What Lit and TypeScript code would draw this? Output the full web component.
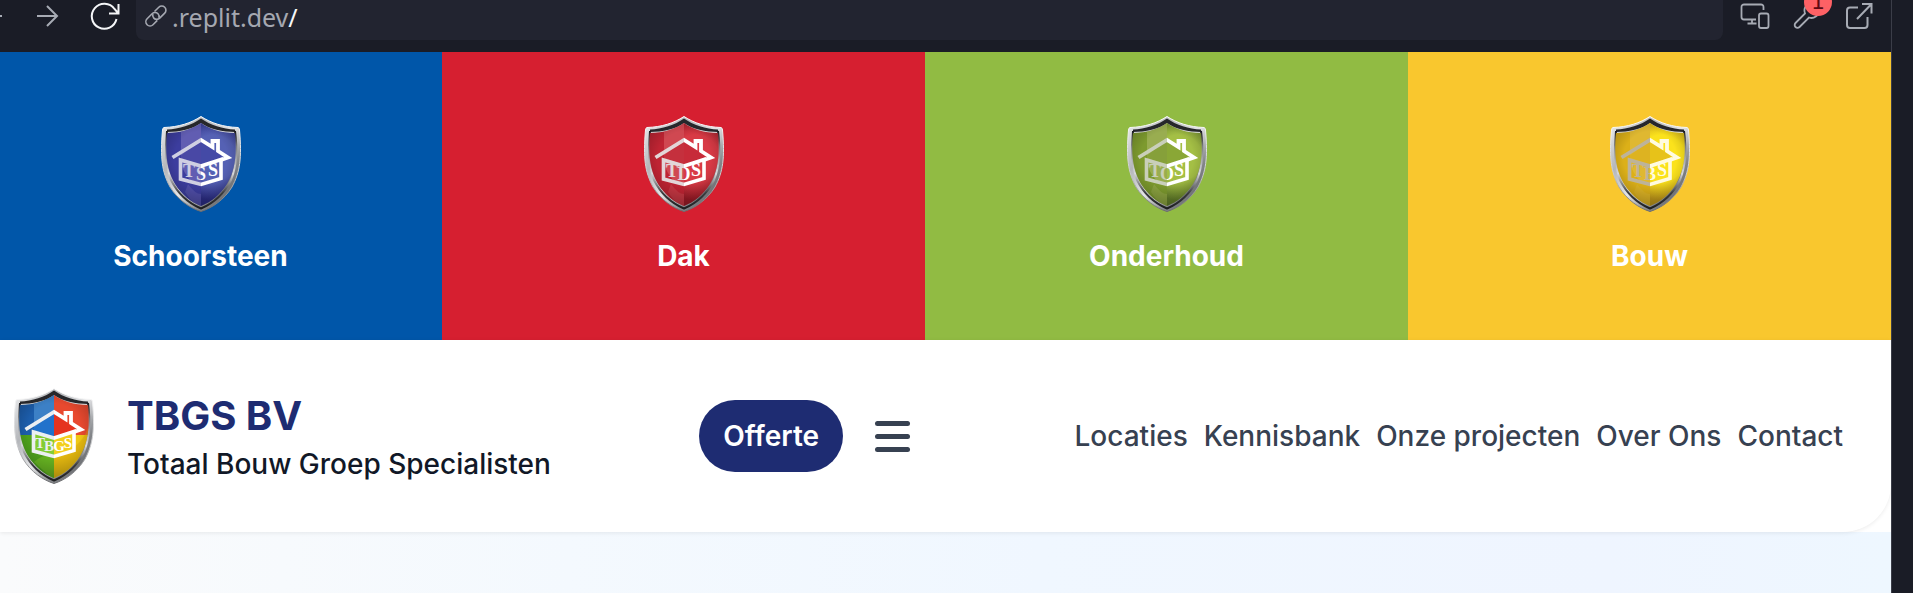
import { LitElement, html, css, svg } from "lit";
import { customElement, property } from "lit/decorators.js";

type Tone = "blue" | "red" | "green" | "yellow" | "multi";

interface ShieldTone {
  dark: string;
  mid: string;
  light: string;
  band: string;
  lineLeft: string;
  lineRight: string;
}

const TONES: Record<Tone, ShieldTone> = {
  blue: { dark: "#2c2d86", mid: "#3c3d9e", light: "#5561b4", band: "#6d68b8", lineLeft: "#cfcfe2", lineRight: "#ffffff" },
  red: { dark: "#9c1a26", mid: "#bf2433", light: "#d83a45", band: "#d5545c", lineLeft: "#e2d6d8", lineRight: "#ffffff" },
  green: { dark: "#64802a", mid: "#7d9a2e", light: "#a4bf45", band: "#a3b35c", lineLeft: "#c9cfba", lineRight: "#ffffff" },
  yellow: { dark: "#c39a1a", mid: "#dcb018", light: "#fbe21c", band: "#e0bb3a", lineLeft: "#bdb39a", lineRight: "#fffbe0" },
  multi: { dark: "#1d4f9c", mid: "#2a69b5", light: "#e8442e", band: "#4a86c8", lineLeft: "#eceff2", lineRight: "#ffffff" },
};

const INNER = "M40 7C48 13 60 17 74 17C76 40 74 54 66 68C59 79 50 86 40 90C30 86 21 79 14 68C6 54 4 40 6 17C20 17 32 13 40 7Z";

@customElement("brand-shield")
export class BrandShield extends LitElement {
  @property() tone: Tone = "blue";
  @property() letters = "";

  static styles = css`
    :host { display: block; flex: none; width: 80px; height: 96px; }
    .shield { display: block; width: 100%; height: 100%; }
    .letters { font: bold 18px "Liberation Serif", serif; text-anchor: middle; }
    .letters.four { font-size: 15px; }
  `;

  private renderField(t: ShieldTone) {
    if (this.tone === "multi") {
      return svg`
        <rect width="40" height="47" fill="#1c5dab"></rect>
        <rect x="20" width="20" height="47" fill="#3c80c6"></rect>
        <rect x="40" width="40" height="47" fill="#e8492f"></rect>
        <rect y="47" width="40" height="49" fill="#4da01c"></rect>
        <rect x="40" y="47" width="40" height="49" fill="#efc814"></rect>
        <path d="M40 24 62 41 40 49Z" fill="#e5331f"></path>
        <path d="M40 24 18 41 40 49Z" fill="#2272cb"></path>
        <path d="M19.500 44 40 50V68.500L19.500 63Z" fill="#84cc34"></path>
        <path d="M60 44 40 50V68.500L60 63Z" fill="#f3cf1c"></path>
        <path d="M20 74Q30 65 40 68V92Z" fill="#67b522"></path>
        <path d="M40 96V68Q66 62 74 40V96Z" fill="#d9a60a" opacity=".45"></path>`;
    }
    return svg`
      <rect width="40" height="96" fill=${t.mid}></rect>
      <rect x="40" width="40" height="96" fill="url(#glow)"></rect>
      <path d="M20 0H40V70Q26 66 20 48Z" fill=${t.band} opacity=".75"></path>
      <path d="M40 24 62 41 40 49 18 41Z" fill=${t.mid} opacity=".65"></path>
      <path d="M27 68Q34 78 40 78V92Q30 86 24 76Z" fill=${t.band} opacity=".4"></path>`;
  }

  render() {
    const t = TONES[this.tone];
    const four = this.letters.length > 3;
    return html`
      <svg class="shield" viewBox="0 0 80 96" aria-hidden="true">
        <defs>
          <linearGradient id="metal" x1="0" y1="0" x2="1" y2="1">
            <stop offset="0" stop-color="#f2f3f4"></stop>
            <stop offset=".3" stop-color="#b4b6ba"></stop>
            <stop offset=".52" stop-color="#e4e5e7"></stop>
            <stop offset=".72" stop-color="#85878b"></stop>
            <stop offset="1" stop-color="#4b4d50"></stop>
          </linearGradient>
          <linearGradient id="edge" x1="0" y1="0" x2="0" y2="1">
            <stop offset="0" stop-color="#17181c"></stop>
            <stop offset=".2" stop-color="#7a7c80"></stop>
            <stop offset=".55" stop-color="#d8d9db"></stop>
            <stop offset=".8" stop-color="#3a3b3e"></stop>
            <stop offset="1" stop-color="#1d1e20"></stop>
          </linearGradient>
          <linearGradient id="rim" x1="0" y1="0" x2="0" y2="1">
            <stop offset="0" stop-color="#ffffff"></stop>
            <stop offset=".6" stop-color="#c9cacc"></stop>
            <stop offset="1" stop-color="#6a6b6e"></stop>
          </linearGradient>
          <radialGradient id="glow" gradientUnits="userSpaceOnUse" cx="52" cy="42" r="42">
            <stop offset="0" stop-color=${t.light}></stop>
            <stop offset=".55" stop-color=${t.light}></stop>
            <stop offset="1" stop-color=${t.dark}></stop>
          </radialGradient>
          <radialGradient id="shade" gradientUnits="userSpaceOnUse" cx="40" cy="42" r="48">
            <stop offset=".55" stop-color="#000000" stop-opacity="0"></stop>
            <stop offset="1" stop-color="#000000" stop-opacity=".25"></stop>
          </radialGradient>
          <linearGradient id="line" gradientUnits="userSpaceOnUse" x1="0" y1="0" x2="80" y2="0">
            <stop offset=".5" stop-color=${t.lineLeft}></stop>
            <stop offset=".5" stop-color=${t.lineRight}></stop>
          </linearGradient>
          <clipPath id="field"><path d=${INNER}></path></clipPath>
        </defs>
        <path
          d="M40 .5C50 7 62 11 77 11.500Q78.500 12 78.500 14C81 42 79 56 71 71C63 84 51 92 40 95.500C29 92 17 84 9 71C1 56 -1 42 1.500 14Q1.500 12 3 11.500C18 11 30 7 40 .5Z"
          fill="url(#metal)" stroke="url(#rim)"></path>
        <path d="M40 2.500C49 9 62 13 74 13.500V16C62 16 48 13 40 7C32 13 18 16 6 16V13.500C18 13 31 9 40 2.500Z" fill="#26272b"></path>
        <path d="M74 15Q78 44 70 64Q60 84 40 92.500Q20 84 10 64Q3 44 6 15" fill="none" stroke="url(#edge)" stroke-width="2"></path>
        <g clip-path="url(#field)">
          ${this.renderField(t)}
          <rect width="80" height="96" fill="url(#shade)"></rect>
        </g>
        <path d="M11.500 41.500 40 24 51.500 31V25H57V35L67 41.500 60 44" fill="none" stroke="url(#line)" stroke-width="3.800"></path>
        <path d="M19.500 44 40 50 60 43.500V62.500L40 68.500 19.500 63Z" fill="none" stroke="url(#line)" stroke-width="3.600"></path>
        ${four
          ? svg`<text class="letters four" x="26 35 45 54" y="59.500 62.500 62.500 59.500" fill="url(#line)">${this.letters}</text>`
          : svg`<text class="letters" x="28 40 52" y="60.500 64 60" fill="url(#line)">${this.letters}</text>`}
      </svg>`;
  }
}

@customElement("browser-bar")
export class BrowserBar extends LitElement {
  static styles = css`
    :host { display: block; background: #1a1c26; }
    .bar { display: flex; align-items: flex-start; height: 52px; box-sizing: border-box; padding-right: 16px; }
    .tool { display: flex; align-items: center; justify-content: center; position: relative; flex: none; height: 32px; padding: 0; border: 0; background: none; color: #a7abb4; }
    .tool svg { display: block; overflow: visible; }
    .back { width: 2px; justify-content: flex-end; }
    .forward { width: 90px; }
    .reload { width: 26px; color: #f5f6f8; }
    .address { display: flex; align-items: flex-start; flex: 1; gap: 4px; height: 40px; margin: 0 16px 0 18px; padding-left: 8px; box-sizing: border-box; border-radius: 0 0 8px 8px; background: #222430; color: #a5a8b1; }
    .link { flex: none; margin-top: 4px; }
    .url { font: 25px/34px "Noto Sans", sans-serif; }
    .slash { color: #f5f6f8; }
    .tools { display: flex; gap: 20px; }
    .tools .tool { width: 32px; }
    .badge { position: absolute; top: -12px; right: -9px; width: 28px; height: 28px; border-radius: 50%; background: #fe6165; color: #5c0a14; font: 22px/28px "DejaVu Sans", sans-serif; text-align: center; }
  `;

  render() {
    return html`
      <div class="bar">
        <button class="tool back" aria-label="Back">
          <svg width="24" height="24" viewBox="0 0 24 24" fill="none" stroke="currentColor" stroke-width="2"><path d="M3 12h21"></path></svg>
        </button>
        <button class="tool forward" aria-label="Forward">
          <svg width="24" height="24" viewBox="0 0 24 24" fill="none" stroke="currentColor" stroke-width="2"><path d="M2 12h20M12 2l10 10-10 10"></path></svg>
        </button>
        <button class="tool reload" aria-label="Reload">
          <svg width="30" height="28" viewBox="0 0 30 28" fill="none" stroke="currentColor" stroke-width="2"><path d="M26.500 17A12.500 12.500 0 1 1 24.500 7L28 11M28.500 2v9.500H19"></path></svg>
        </button>
        <div class="address">
          <svg class="link" width="24" height="24" viewBox="0 0 24 24" fill="none" stroke="currentColor" stroke-width="1.600">
            <path d="M10.500 7.500 14.800 3.200a4.100 4.100 0 0 1 5.900 5.900l-5 5a4.100 4.100 0 0 1-5.900 0 3.800 3.800 0 0 1-.8-4.100"></path>
            <path d="M13.300 16.400 9 20.700a4.100 4.100 0 0 1-5.900-5.900l5-5a4.100 4.100 0 0 1 5.900 0 3.800 3.800 0 0 1 .8 4.100"></path>
          </svg>
          <span class="url">.replit.dev<span class="slash">/</span></span>
        </div>
        <div class="tools">
          <button class="tool" aria-label="Devices">
            <svg width="30" height="28" viewBox="0 0 30 28" fill="none" stroke="currentColor" stroke-width="1.800">
              <path d="M23.500 8V5a2.500 2.500 0 0 0-2.500-2.500H4A2.500 2.500 0 0 0 1.500 5v10A2.500 2.500 0 0 0 4 17.500h12M12 17.500v4M7.500 21.500h9"></path>
              <rect x="19" y="11.500" width="9.500" height="14.500" rx="2"></rect>
            </svg>
          </button>
          <button class="tool" aria-label="Developer tools, 1 message">
            <svg width="28" height="28" viewBox="0 0 28 28" fill="none" stroke="currentColor" stroke-width="1.800">
              <path d="M26 8.500a7.500 7.500 0 0 1-10 7L6.500 25a2.800 2.800 0 0 1-4-4L12 11.500a7.500 7.500 0 0 1 9-10l-4 5 3 3Z"></path>
            </svg>
            <span class="badge">1</span>
          </button>
          <button class="tool" aria-label="Open in new tab">
            <svg width="28" height="28" viewBox="0 0 28 28" fill="none" stroke="currentColor" stroke-width="2">
              <path d="M13 5.500H5A3 3 0 0 0 2 8.500V23a3 3 0 0 0 3 3h14.500a3 3 0 0 0 3-3V15M17 2h9.500v9.500M26 2.500 12 17"></path>
            </svg>
          </button>
        </div>
      </div>`;
  }
}

@customElement("app-root")
export class AppRoot extends LitElement {
  static styles = css`
    :host { display: block; background: #1a1c26; font-family: Inter, sans-serif; }
    .window { display: flex; flex-direction: column; min-height: 100vh; margin-right: 22px; overflow: hidden; box-shadow: 1px 0 0 #3b3d48; }
    .tiles { display: grid; grid-template-columns: repeat(4, 1fr); margin-left: -41px; }
    .tile { display: flex; flex-direction: column; align-items: center; gap: 24px; padding: 64px 0; color: #ffffff; font-size: 28px; line-height: 40px; font-weight: 700; text-decoration: none; }
    .tile.blue { background: #0056a9; }
    .tile.red { background: #d61f30; }
    .tile.green { background: #91bb43; }
    .tile.yellow { background: #f9c72e; }
    .page { display: flex; flex-direction: column; flex: 1; background: #ffffff; }
    .nav { display: flex; align-items: center; justify-content: space-between; padding: 48px 48px 48px 14px; border-radius: 0 0 48px 0; background: #ffffff; box-shadow: 0 1px 4px rgba(0, 0, 0, 0.08); position: relative; }
    .brand { display: flex; align-items: center; gap: 33px; color: #111827; text-decoration: none; }
    .names { display: flex; flex-direction: column; }
    .name { color: #1e2c72; font-size: 40px; line-height: 56px; font-weight: 700; }
    .tagline { font-size: 28px; line-height: 40px; font-weight: 500; }
    .actions { display: flex; align-items: center; gap: 16px; }
    .quote { padding: 16px 24px; border: 0; border-radius: 36px; background: #1e2c72; color: #ffffff; font: 600 28px/40px Inter, sans-serif; }
    .menu { display: flex; flex-direction: column; gap: 8px; padding: 16px; border: 0; background: none; }
    .line { width: 35px; height: 5px; border-radius: 3px; background: #374151; }
    .links { display: flex; gap: 16px; margin: 0; padding: 0; list-style: none; }
    .item { color: #374151; font-size: 28px; line-height: 40px; font-weight: 500; text-decoration: none; }
    .hero { flex: 1; background: linear-gradient(90deg, #fafbfc, #f4f9fe 30%, #f0f7ff 55%, #eff5ff 85%, #eef7ff); }
  `;

  private tiles: { tone: Tone; letters: string; label: string }[] = [
    { tone: "blue", letters: "TSS", label: "Schoorsteen" },
    { tone: "red", letters: "TDS", label: "Dak" },
    { tone: "green", letters: "TOS", label: "Onderhoud" },
    { tone: "yellow", letters: "TBS", label: "Bouw" },
  ];

  private links = ["Locaties", "Kennisbank", "Onze projecten", "Over Ons", "Contact"];

  render() {
    return html`
      <div class="window">
        <browser-bar></browser-bar>
        <div class="tiles">
          ${this.tiles.map(
            (t) => html`<a class="tile ${t.tone}" href="#">
              <brand-shield .tone=${t.tone} .letters=${t.letters}></brand-shield>
              <span>${t.label}</span>
            </a>`,
          )}
        </div>
        <div class="page">
          <nav class="nav">
            <a class="brand" href="#">
              <brand-shield .tone=${"multi"} .letters=${"TBGS"}></brand-shield>
              <span class="names">
                <span class="name">TBGS BV</span>
                <span class="tagline">Totaal Bouw Groep Specialisten</span>
              </span>
            </a>
            <div class="actions">
              <button class="quote">Offerte</button>
              <button class="menu" aria-label="Menu">
                <span class="line"></span><span class="line"></span><span class="line"></span>
              </button>
            </div>
            <ul class="links">
              ${this.links.map((l) => html`<li><a class="item" href="#">${l}</a></li>`)}
            </ul>
          </nav>
          <main class="hero"></main>
        </div>
      </div>`;
  }
}
